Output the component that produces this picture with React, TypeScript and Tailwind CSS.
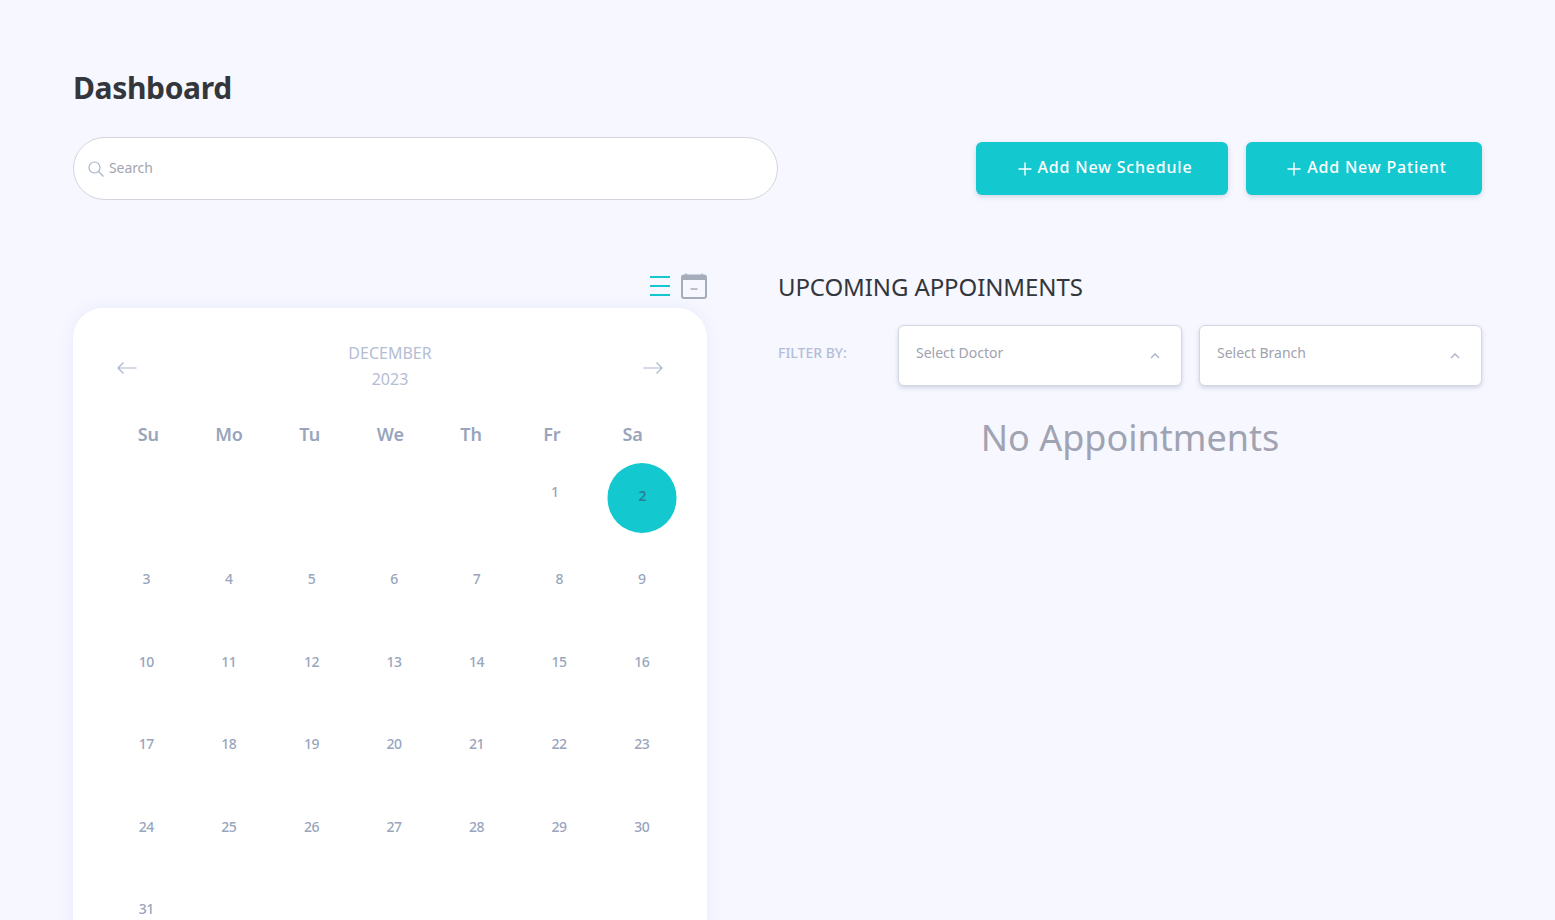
const weeks: (number | null)[][] = [
  [null, null, null, null, null, 1, 2],
  [3, 4, 5, 6, 7, 8, 9],
  [10, 11, 12, 13, 14, 15, 16],
  [17, 18, 19, 20, 21, 22, 23],
  [24, 25, 26, 27, 28, 29, 30],
  [31, null, null, null, null, null, null],
];
const days = ["Su", "Mo", "Tu", "We", "Th", "Fr", "Sa"];

function Arrow({ right }: { right?: boolean }) {
  return (
    <svg width="20" height="14" viewBox="0 0 20 14" fill="none" stroke="#aab5d0" strokeWidth="1.2" className={`mt-[4px] ${right ? "" : "rotate-180"}`}>
      <path d="M0.5 7H19M13.5 1.5L19 7L13.5 12.5" />
    </svg>
  );
}

function Select({ label, className }: { label: string; className: string }) {
  return (
    <div className={`flex h-[61px] items-center justify-between rounded-[6px] border border-[#d5d7e0] bg-white pl-[17px] pr-[21px] shadow-[0_2px_4px_rgba(140,150,180,0.35)] ${className}`}>
      <span className="-translate-y-[3px] text-[14px] text-[#a0a3ae]">{label}</span>
      <svg width="10" height="6" viewBox="0 0 10 6" fill="none" stroke="#a9b2c8" strokeWidth="1.3">
        <path d="M1 5L5 1L9 5" />
      </svg>
    </div>
  );
}

function AddButton({ label, className }: { label: string; className: string }) {
  return (
    <button className={`flex h-[53px] items-center justify-center gap-[6px] rounded-[6px] bg-[#14c8d0] pl-[6px] text-[16px] font-medium tracking-[0.8px] text-white shadow-[0_2px_5px_rgba(140,150,180,0.35)] ${className}`}>
      <svg width="14" height="14" viewBox="0 0 14 14" stroke="#ffffff" strokeWidth="1.4" className="mt-[1px]">
        <path d="M7 0.5V13.5M0.5 7H13.5" />
      </svg>
      <span className="-translate-y-[2px]">{label}</span>
    </button>
  );
}

export default function App() {
  return (
    <div className="h-screen overflow-hidden bg-[#f6f7ff] px-[73px] pt-[67px] font-['Noto_Sans',sans-serif]">
      <h1 className="text-[30px] font-bold leading-[42px] tracking-[-0.35px] text-[#33363b]">Dashboard</h1>

      <div className="mt-[28px] flex items-center justify-between">
        <div className="flex h-[63px] w-[705px] items-center gap-[5px] rounded-full border border-[#d3d4dc] bg-white pl-[14px]">
          <svg width="16" height="16" viewBox="0 0 16 16" fill="none" stroke="#a9b3ca" strokeWidth="1.2">
            <circle cx="6.5" cy="6.5" r="5.5" />
            <path d="M10.5 10.5L15.5 15.5" />
          </svg>
          <span className="-translate-y-[1px] text-[14px] tracking-[-0.1px] text-[#a3a5b0]">Search</span>
        </div>
        <div className="flex gap-[18px]">
          <AddButton label="Add New Schedule" className="w-[252px]" />
          <AddButton label="Add New Patient" className="w-[236px]" />
        </div>
      </div>

      <div className="mt-[73px] flex">
        <div className="w-[634px] shrink-0">
          <div className="flex h-[35px] items-start justify-end gap-[11px]">
            <svg width="20" height="20" viewBox="0 0 20 20" stroke="#14c8d0" strokeWidth="2" className="mt-[3px]">
              <path d="M0 1H20M0 10H20M0 19H20" />
            </svg>
            <svg width="26" height="26" viewBox="0 0 26 26" fill="none">
              <rect x="1" y="2.5" width="24" height="22.5" rx="2" stroke="#a5acba" strokeWidth="2" />
              <path d="M1 3.5a1.5 1.5 0 0 1 1.5-1.5H23.5a1.5 1.5 0 0 1 1.5 1.5V7H1Z" fill="#a5acba" />
              <path d="M5 0.5V3M21 0.5V3" stroke="#a5acba" strokeWidth="1.5" />
              <path d="M9.5 16H16.5" stroke="#a5acba" strokeWidth="1.5" />
            </svg>
          </div>

          <div className="h-[700px] rounded-[30px] bg-white px-[32px] pt-[32px] shadow-[0_0_16px_rgba(170,175,230,0.16)]">
            <div className="flex items-center justify-between px-[12px]">
              <Arrow />
              <div className="text-center text-[16px] leading-[26px] text-[#b4bdd4]">
                <div>DECEMBER</div>
                <div>2023</div>
              </div>
              <Arrow right />
            </div>

            <div className="mt-[29px] grid w-[565px] translate-x-[3px] grid-cols-7 text-center text-[18px] font-semibold leading-[26px] text-[#98a5bd]">
              {days.map((d) => (
                <div key={d}>{d}</div>
              ))}
            </div>

            <div className="mt-[8px] w-[578px]">
              {weeks.map((week, i) => (
                <div key={i} className="grid h-[82.5px] grid-cols-7 text-[14px] font-medium tracking-[-0.5px] text-[#98a5bd]">
                  {week.map((n, j) => (
                    <div key={j} className="flex items-center justify-center">
                      {n === 2 ? (
                        <span className="flex h-[70px] w-[69px] translate-x-[0.5px] translate-y-[2px] items-center justify-center rounded-full bg-[#14c8d0] font-semibold text-[#287f9c]">
                          <span className="-translate-y-[3px]">2</span>
                        </span>
                      ) : n === 1 ? (
                        <span className="-translate-x-[4.5px] -translate-y-[5px]">1</span>
                      ) : (
                        n
                      )}
                    </div>
                  ))}
                </div>
              ))}
            </div>
          </div>
        </div>

        <div className="ml-[71px] flex-1 -translate-y-[3px]">
          <h2 className="-translate-y-[1px] text-[24px] leading-[35px] tracking-[-0.1px] text-[#33363b]">UPCOMING APPOINMENTS</h2>
          <div className="mt-[20px] flex items-center">
            <span className="w-[120px] -translate-y-[3px] text-[14px] font-medium text-[#b4bdd8]">FILTER BY:</span>
            <div className="flex gap-[17px]">
              <Select label="Select Doctor" className="w-[284px]" />
              <Select label="Select Branch" className="w-[283px]" />
            </div>
          </div>
          <div className="mt-[24px] text-center text-[36px] leading-[56px] text-[#a0a3b1]">No Appointments</div>
        </div>
      </div>
    </div>
  );
}
